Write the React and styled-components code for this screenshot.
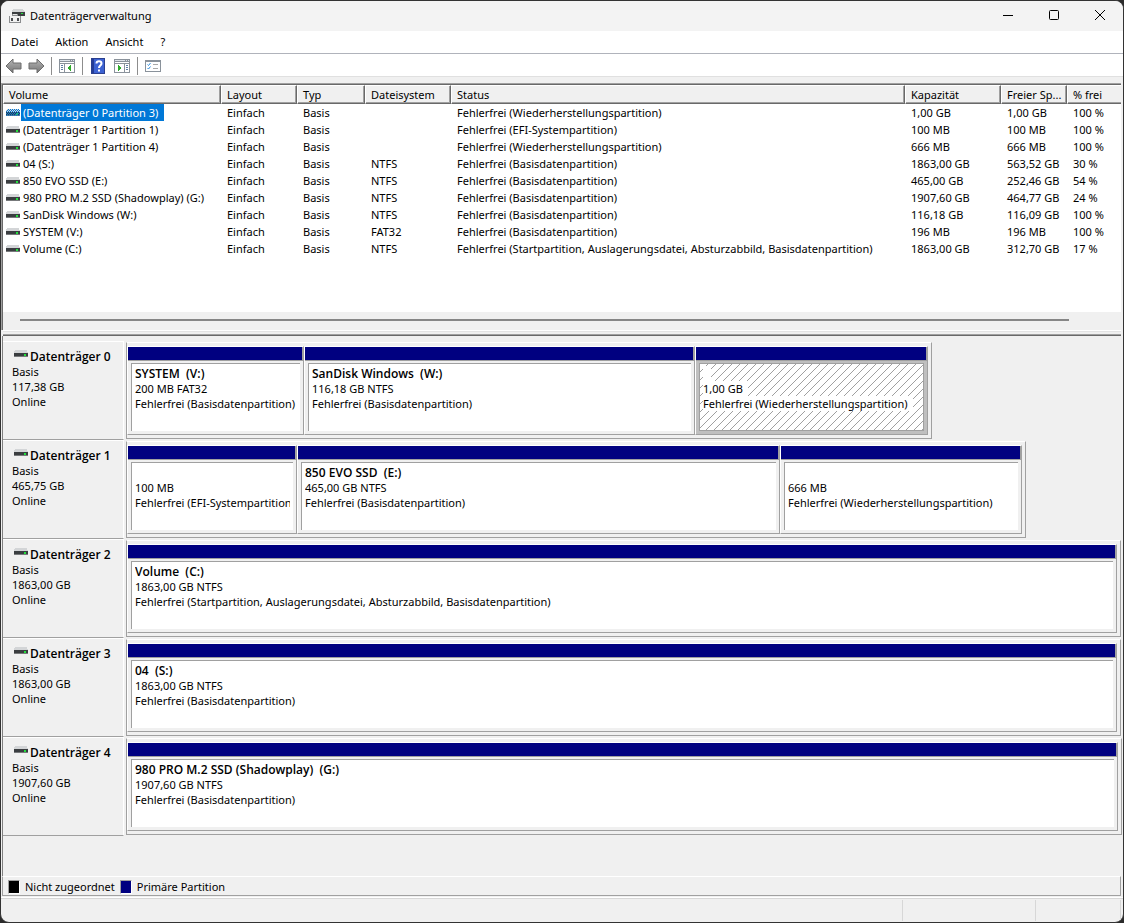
import React from "react";
import styled, { createGlobalStyle, css } from "styled-components";

const volumes = [
  ["(Datenträger 0 Partition 3)", "", "Fehlerfrei (Wiederherstellungspartition)", "1,00 GB", "1,00 GB", "100 %"],
  ["(Datenträger 1 Partition 1)", "", "Fehlerfrei (EFI-Systempartition)", "100 MB", "100 MB", "100 %"],
  ["(Datenträger 1 Partition 4)", "", "Fehlerfrei (Wiederherstellungspartition)", "666 MB", "666 MB", "100 %"],
  ["04 (S:)", "NTFS", "Fehlerfrei (Basisdatenpartition)", "1863,00 GB", "563,52 GB", "30 %"],
  ["850 EVO SSD (E:)", "NTFS", "Fehlerfrei (Basisdatenpartition)", "465,00 GB", "252,46 GB", "54 %"],
  ["980 PRO M.2 SSD (Shadowplay) (G:)", "NTFS", "Fehlerfrei (Basisdatenpartition)", "1907,60 GB", "464,77 GB", "24 %"],
  ["SanDisk Windows (W:)", "NTFS", "Fehlerfrei (Basisdatenpartition)", "116,18 GB", "116,09 GB", "100 %"],
  ["SYSTEM (V:)", "FAT32", "Fehlerfrei (Basisdatenpartition)", "196 MB", "196 MB", "100 %"],
  ["Volume (C:)", "NTFS", "Fehlerfrei (Startpartition, Auslagerungsdatei, Absturzabbild, Basisdatenpartition)", "1863,00 GB", "312,70 GB", "17 %"],
];

const disks = [
  {
    name: "Datenträger 0",
    size: "117,38 GB",
    span: 806,
    rest: 190,
    parts: [
      { span: 177, name: "SYSTEM\u00a0 (V:)", info: "200 MB FAT32", state: "Fehlerfrei (Basisdatenpartition)" },
      { span: 391, name: "SanDisk Windows\u00a0 (W:)", info: "116,18 GB NTFS", state: "Fehlerfrei (Basisdatenpartition)" },
      { span: 233, name: "", info: "1,00 GB", state: "Fehlerfrei (Wiederherstellungspartition)", selected: true },
    ],
  },
  {
    name: "Datenträger 1",
    size: "465,75 GB",
    span: 900,
    rest: 96,
    parts: [
      { span: 170, name: "", info: "100 MB", state: "Fehlerfrei (EFI-Systempartition)" },
      { span: 483, name: "850 EVO SSD\u00a0 (E:)", info: "465,00 GB NTFS", state: "Fehlerfrei (Basisdatenpartition)" },
      { span: 242, name: "", info: "666 MB", state: "Fehlerfrei (Wiederherstellungspartition)" },
    ],
  },
  {
    name: "Datenträger 2",
    size: "1863,00 GB",
    span: 995,
    rest: 1,
    parts: [
      {
        span: 1,
        name: "Volume\u00a0 (C:)",
        info: "1863,00 GB NTFS",
        state: "Fehlerfrei (Startpartition, Auslagerungsdatei, Absturzabbild, Basisdatenpartition)",
      },
    ],
  },
  {
    name: "Datenträger 3",
    size: "1863,00 GB",
    span: 995,
    rest: 1,
    parts: [{ span: 1, name: "04\u00a0 (S:)", info: "1863,00 GB NTFS", state: "Fehlerfrei (Basisdatenpartition)" }],
  },
  {
    name: "Datenträger 4",
    size: "1907,60 GB",
    span: 996,
    rest: 0,
    parts: [
      {
        span: 1,
        name: "980 PRO M.2 SSD (Shadowplay)\u00a0 (G:)",
        info: "1907,60 GB NTFS",
        state: "Fehlerfrei (Basisdatenpartition)",
      },
    ],
  },
];

function DriveIcon({ selected }) {
  return (
    <svg width="14" height="7" viewBox="0 0 14 7" shapeRendering="crispEdges">
      <path d="M1 0H13L14 3H0Z" fill="#d3d5d7" />
      <path d="M0 3H14V7H0Z" fill="#3a3d40" />
      <path d="M0 6H14V7H0Z" fill="#77797b" />
      <path d="M10 4H12V6H10Z" fill="#22e03c" />
      {selected && (
        <>
          <defs>
            <pattern id="dither" width="2" height="2" patternUnits="userSpaceOnUse">
              <path d="M0 0H1V1H0ZM1 1H2V2H1Z" fill="#0078d7" />
            </pattern>
          </defs>
          <path d="M1 0H13V1H14V7H0V1H1Z" fill="url(#dither)" />
        </>
      )}
    </svg>
  );
}

function AppIcon() {
  return (
    <svg width="16" height="16" viewBox="0 0 16 16" shapeRendering="crispEdges">
      <path d="M4 1H14L16 4H3Z" fill="#d2d4d5" />
      <path d="M3 4H16V8H3Z" fill="#3b3e40" />
      <path d="M12 5H14V6H12Z" fill="#22e03c" />
      <path d="M3 6H9V8H12V15H0V8H3Z" fill="#8b8d8f" />
      <path d="M1 8H11V14H1Z" fill="#f1f1f1" />
      <path d="M4 6H8V7H4Z" fill="#e4e4e4" />
      <path d="M2 10H4V13H2ZM8 10H10V13H8Z" fill="#4b4d50" />
    </svg>
  );
}

function ArrowIcon({ right }) {
  return (
    <svg width="18" height="16" viewBox="0 0 18 16">
      <defs>
        <linearGradient id="arrow" x1="0" y1="0" x2="0" y2="1">
          <stop offset="0" stopColor="#b5b5b5" />
          <stop offset="1" stopColor="#757575" />
        </linearGradient>
      </defs>
      <path
        d="M1 8L8 1V5H16V11H8V15Z"
        transform={right ? "translate(18 0) scale(-1 1)" : undefined}
        fill="url(#arrow)"
        stroke="#6d6d6d"
      />
    </svg>
  );
}

function PaneIcon({ right }) {
  return (
    <svg width="16" height="14" viewBox="0 0 16 14" shapeRendering="crispEdges">
      <path d="M0 0H16V14H0Z" fill="#8a929b" />
      <path d="M1 3H15V13H1Z" fill="#fff" />
      <path d="M1 1H11V2H1ZM12 1H13V2H12ZM14 1H15V2H14Z" fill="#dfe4ea" />
      <path d="M1 4H15V5H1Z" fill="#8a929b" />
      {right ? (
        <>
          <path d="M10 5H11V13H10Z" fill="#8a929b" />
          <path d="M12 6H14V7H12ZM12 8H14V9H12ZM12 10H14V11H12Z" fill="#5f7ea5" />
          <path d="M4 6L8 9L4 12Z" fill="#2faa2b" />
        </>
      ) : (
        <>
          <path d="M5 5H6V13H5Z" fill="#8a929b" />
          <path d="M2 6H4V7H2ZM2 8H4V9H2ZM2 10H4V11H2Z" fill="#5f7ea5" />
          <path d="M12 6L8 9L12 12Z" fill="#2faa2b" />
        </>
      )}
    </svg>
  );
}

function HelpIcon() {
  return (
    <svg width="14" height="16" viewBox="0 0 14 16">
      <rect x="0.5" y="0.5" width="13" height="15" fill="#3c62d2" stroke="#2a3f8f" />
      <path d="M1 1H3V15H1Z" fill="#233c96" />
      <path d="M5.5 5.5C5.5 2.5 10.5 2.5 10.5 5.5C10.5 7.5 8 7.7 8 10" fill="none" stroke="#fff" strokeWidth="2" />
      <path d="M7 11.5H9V13.5H7Z" fill="#fff" />
    </svg>
  );
}

function TaskIcon() {
  return (
    <svg width="16" height="12" viewBox="0 0 16 12">
      <path d="M0 0H16V12H0Z" fill="#8a929b" />
      <path d="M1 2H15V11H1Z" fill="#fff" />
      <path d="M2.5 4.5L3.5 5.5L5.5 3M2.5 8L3.5 9L5.5 6.5" fill="none" stroke="#2f8fe0" />
      <path d="M8 4H13V5H8ZM8 8H13V9H8Z" fill="#a9a9a9" />
    </svg>
  );
}

function Disk({ disk }) {
  return (
    <DiskRow>
      <DiskLabel>
        <DiskName>
          <DriveIcon />
          {disk.name}
        </DiskName>
        <p>Basis</p>
        <p>{disk.size}</p>
        <p>Online</p>
      </DiskLabel>
      <DiskArea $span={disk.span} $rest={disk.rest}>
        <Partitions $cols={disk.parts.map((p) => `minmax(0, ${p.span}fr)`).join(" ")}>
          {disk.parts.map((part) => (
            <Partition key={part.state + part.info}>
              <Bar />
              <PartFrame $selected={part.selected}>
                <PartBody $selected={part.selected}>
                  <PartName>
                    <span>{part.name || "\u00a0"}</span>
                  </PartName>
                  <p>
                    <span>{part.info}</span>
                  </p>
                  <p>
                    <span>{part.state}</span>
                  </p>
                </PartBody>
              </PartFrame>
            </Partition>
          ))}
        </Partitions>
      </DiskArea>
    </DiskRow>
  );
}

export default function App() {
  return (
    <>
      <GlobalStyle />
      <Window>
        <TitleBar>
          <AppIcon />
          <h1>Datenträgerverwaltung</h1>
          <Caption aria-label="Minimieren">
            <svg width="12" height="12" viewBox="0 0 12 12" shapeRendering="crispEdges">
              <path d="M1 5H11V6H1Z" />
            </svg>
          </Caption>
          <Caption aria-label="Maximieren">
            <svg width="12" height="12" viewBox="0 0 12 12">
              <rect x="1.5" y="0.5" width="9" height="9" rx="1" fill="none" stroke="#000" />
            </svg>
          </Caption>
          <Caption aria-label="Schließen">
            <svg width="12" height="12" viewBox="0 0 12 12">
              <path d="M1 0L11 10M11 0L1 10" stroke="#000" />
            </svg>
          </Caption>
        </TitleBar>
        <MenuBar>
          <button>Datei</button>
          <button>Aktion</button>
          <button>Ansicht</button>
          <button>?</button>
        </MenuBar>
        <ToolBar>
          <Tool aria-label="Zurück">
            <ArrowIcon />
          </Tool>
          <Tool aria-label="Vorwärts">
            <ArrowIcon right />
          </Tool>
          <Divider />
          <Tool aria-label="Konsolenstruktur einblenden">
            <PaneIcon />
          </Tool>
          <Divider />
          <Tool aria-label="Hilfe">
            <HelpIcon />
          </Tool>
          <Tool aria-label="Aktionsbereich einblenden">
            <PaneIcon right />
          </Tool>
          <Divider />
          <Tool aria-label="Einstellungen">
            <TaskIcon />
          </Tool>
        </ToolBar>
        <ListPane>
          <ListInner>
            <VolumeTable>
              <colgroup>
                <Col $width={218} />
                <Col $width={76} />
                <Col $width={68} />
                <Col $width={86} />
                <col />
                <Col $width={96} />
                <Col $width={66} />
                <Col $width={54} />
              </colgroup>
              <thead>
                <tr>
                  <th>Volume</th>
                  <th>Layout</th>
                  <th>Typ</th>
                  <th>Dateisystem</th>
                  <th>Status</th>
                  <th>Kapazität</th>
                  <th>Freier Sp...</th>
                  <th>% frei</th>
                </tr>
              </thead>
              <tbody>
                {volumes.map(([name, fs, state, capacity, free, percent], i) => (
                  <tr key={name}>
                    <td>
                      <VolumeName $selected={i === 0}>
                        <DriveIcon selected={i === 0} />
                        <span>{name}</span>
                      </VolumeName>
                    </td>
                    <td>Einfach</td>
                    <td>Basis</td>
                    <td>{fs}</td>
                    <td>{state}</td>
                    <td>{capacity}</td>
                    <td>{free}</td>
                    <td>{percent}</td>
                  </tr>
                ))}
              </tbody>
            </VolumeTable>
            <ScrollBar>
              <Thumb />
            </ScrollBar>
          </ListInner>
        </ListPane>
        <Splitter />
        <DiskPane>
          {disks.map((disk) => (
            <Disk key={disk.name} disk={disk} />
          ))}
        </DiskPane>
        <Legend>
          <Swatch $color="#000000" />
          Nicht zugeordnet
          <Swatch $color="#000080" />
          Primäre Partition
        </Legend>
        <StatusBar>
          <StatusCell />
          <StatusCell $width={133} />
          <StatusCell $width={85} />
        </StatusBar>
      </Window>
    </>
  );
}

const GlobalStyle = createGlobalStyle`
  * {
    box-sizing: border-box;
  }
  body {
    margin: 0;
    background: #2b2b2b;
    color: #000;
    font: 11px/15px "Noto Sans", sans-serif;
  }
  h1, h2, p {
    margin: 0;
    font-size: inherit;
    font-weight: normal;
  }
  button {
    border: 0;
    padding: 0;
    background: none;
    color: inherit;
    font: inherit;
  }
  svg {
    display: block;
    flex: none;
  }
`;

const Window = styled.div`
  display: flex;
  flex-direction: column;
  min-height: 100vh;
  overflow: hidden;
  border: 1px solid #333;
  border-radius: 9px;
  background: #f0f0f0;
`;

const TitleBar = styled.header`
  display: flex;
  align-items: center;
  height: 30px;
  padding-left: 8px;
  background: #f3f3f3;
  h1 {
    flex: 1;
    padding: 0 0 2px 5px;
  }
`;

const Caption = styled.button`
  display: grid;
  place-items: center;
  width: 46px;
  height: 30px;
`;

const MenuBar = styled.nav`
  display: flex;
  gap: 17px;
  height: 23px;
  padding: 0 10px 2px;
  border-bottom: 1px solid #b0b3bb;
  background: #fff;
`;

const ToolBar = styled.div`
  display: flex;
  align-items: center;
  height: 23px;
  padding: 1px 3px 0;
  border-bottom: 1px solid #e0e0e0;
  background: #fff;
`;

const Tool = styled.button`
  display: grid;
  place-items: center;
  width: 24px;
  height: 20px;
  &:first-child {
    width: 20px;
  }
`;

const Divider = styled.div`
  width: 1px;
  height: 18px;
  margin: 0 3px;
  background: #8d8d8d;
`;

const ListPane = styled.section`
  margin: 6px 2px 0 0;
  border-top: 1px solid #a0a0a0;
  border-left: 1px solid #a0a0a0;
  background: #fff;
`;

const ListInner = styled.div`
  border-top: 1px solid #696969;
  border-left: 1px solid #696969;
`;

const VolumeTable = styled.table`
  width: 100%;
  margin-bottom: 55px;
  border-spacing: 0;
  table-layout: fixed;
  th,
  td {
    padding: 0 0 0 6px;
    overflow: hidden;
    font-weight: normal;
    text-align: left;
    white-space: nowrap;
  }
  th {
    height: 19px;
    padding-left: 5px;
    border: 1px solid;
    border-color: #fff #696969 #696969 #fff;
    background: #f0f0f0;
    box-shadow: inset -1px -1px #a0a0a0;
  }
  th:last-child {
    border-right: 0;
    box-shadow: inset 0 -1px #a0a0a0;
  }
  td {
    height: 17px;
  }
  td:first-child {
    padding-left: 3px;
  }
`;

const Col = styled.col`
  width: ${(props) => props.$width}px;
`;

const VolumeName = styled.div`
  display: flex;
  align-items: center;
  gap: 1px;
  height: 17px;
  span {
    padding: 1px 6px 1px 2px;
    ${(props) =>
      props.$selected &&
      css`
        background: #0078d7;
        color: #fff;
      `}
  }
`;

const ScrollBar = styled.div`
  height: 18px;
  padding: 7px 52px 0 17px;
  background: #f0f0f0;
`;

const Thumb = styled.div`
  height: 2px;
  background: #868686;
`;

const Splitter = styled.div`
  height: 6px;
  margin: 0 2px;
  border-top: 1px solid #fff;
  border-bottom: 1px solid #696969;
  box-shadow: inset 0 1px #e3e3e3, inset 0 -1px #a0a0a0;
`;

const DiskPane = styled.section`
  flex: 1;
  margin: 0 1px;
  padding-top: 5px;
  border-left: 1px solid #808080;
`;

const DiskRow = styled.div`
  display: flex;
  height: 99px;
`;

const DiskLabel = styled.div`
  width: 121px;
  padding: 7px 0 0 9px;
  border: solid;
  border-width: 1px 1px 1px 0;
  border-color: #fff #fff #a0a0a0;
`;

const DiskName = styled.h2`
  display: flex;
  gap: 2px;
  padding-left: 2px;
  font: 600 12px/15px "Open Sans", sans-serif;
  svg {
    margin-top: 1px;
  }
`;

const DiskArea = styled.div`
  display: grid;
  flex: 1;
  grid-template-columns: ${(props) => `minmax(0, ${props.$span}fr) ${props.$rest}fr`};
  padding: 1px 0 1px 2px;
`;

const Partitions = styled.div`
  display: grid;
  grid-template-columns: ${(props) => props.$cols};
  padding: 3px 3px 3px 0;
  border: 1px solid #a0a0a0;
  border-top-color: #fff;
`;

const Partition = styled.div`
  display: flex;
  flex-direction: column;
  border: 1px solid;
  border-color: #fff #a0a0a0 #a0a0a0 #fff;
`;

const Bar = styled.div`
  height: 14px;
  border: solid #a0a0a0;
  border-width: 0 1px 1px 0;
  background: #000080;
`;

const PartFrame = styled.div`
  display: flex;
  flex: 1;
  padding: 2px 3px 3px;
  background: ${(props) => (props.$selected ? "#bfbfbf" : "#f0f0f0")};
`;

const PartBody = styled.div`
  flex: 1;
  min-width: 0;
  padding: 2px 3px;
  overflow: hidden;
  border: solid #a0a0a0;
  border-width: 1px 0 0 1px;
  background: #fff;
  white-space: nowrap;
  p {
    height: 15px;
    overflow: hidden;
  }
  ${(props) =>
    props.$selected &&
    css`
      border-width: 1px;
      background: linear-gradient(135deg, #fff 46%, #a0a0a0 46% 54%, #fff 54%) 0 0 / 8px 8px;
      span {
        display: inline-block;
        padding-right: 5px;
        background: #fff;
      }
    `}
`;

const PartName = styled.p`
  font: 600 12px/15px "Open Sans", sans-serif;
`;

const Legend = styled.footer`
  display: flex;
  align-items: center;
  gap: 5px;
  height: 20px;
  margin: 0 2px 0 1px;
  padding: 1px 0 0 5px;
  border: 1px solid #a0a0a0;
  border-top-color: #fff;
`;

const Swatch = styled.span`
  width: 12px;
  height: 14px;
  border: 1px solid;
  border-color: #a0a0a0 #fff #fff #a0a0a0;
  background: ${(props) => props.$color};
`;

const StatusBar = styled.div`
  display: flex;
  height: 25px;
  margin-top: 1px;
  padding: 2px 2px 1px 0;
  border-top: 1px solid #fff;
  box-shadow: inset 0 1px #d7d7d7;
`;

const StatusCell = styled.div`
  flex: ${(props) => (props.$width ? `0 0 ${props.$width}px` : 1)};
  border-right: 1px solid #d7d7d7;
`;
